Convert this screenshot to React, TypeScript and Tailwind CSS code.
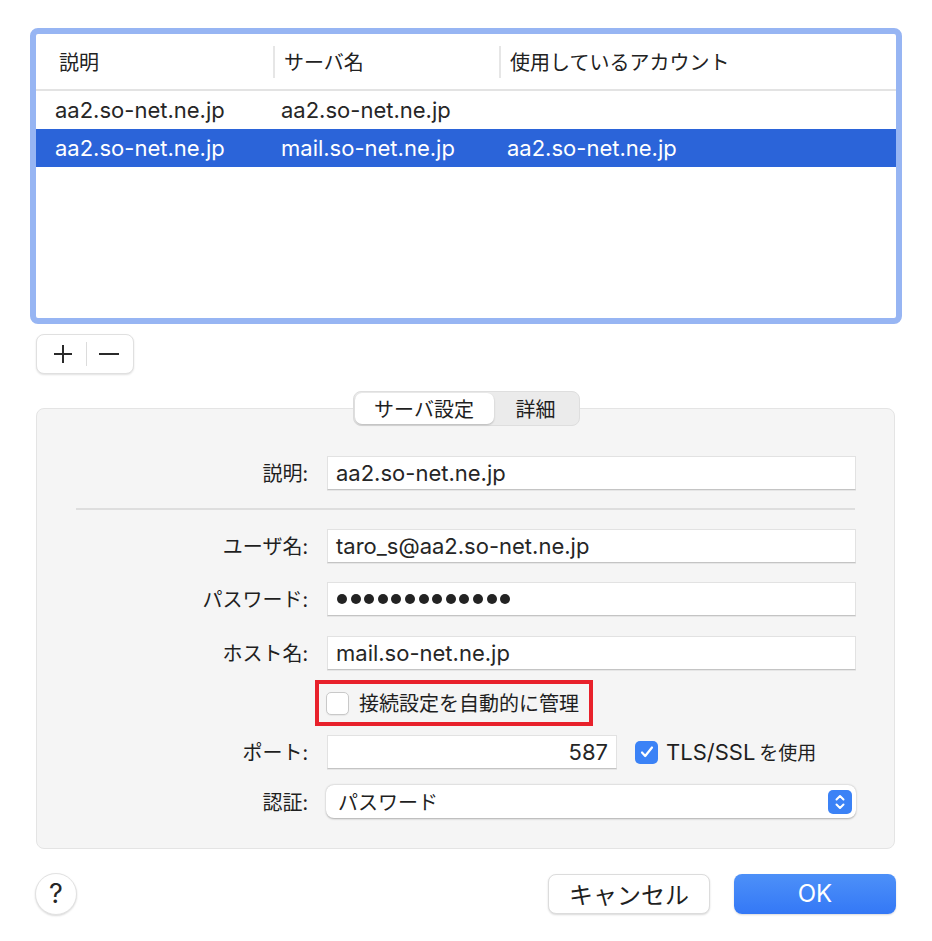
import React from "react";

const LAT = "[font-family:Inter,'Noto_Sans_CJK_JP',sans-serif]";
const JP = "[font-family:'Noto_Sans_CJK_JP',sans-serif]";

type Account = { desc: string; server: string; used: string; selected?: boolean };

const accounts: Account[] = [
  { desc: "aa2.so-net.ne.jp", server: "aa2.so-net.ne.jp", used: "" },
  { desc: "aa2.so-net.ne.jp", server: "mail.so-net.ne.jp", used: "aa2.so-net.ne.jp", selected: true },
];

function HeaderCell({ label, first }: { label: string; first?: boolean }) {
  return (
    <div className="flex items-center h-full">
      {!first && <span className="w-[2px] h-[32px] bg-[#e6e6e6] mr-[9px]" />}
      <span className={`${JP} text-[20px] leading-[28px] text-[#222] ${first ? "pl-[23px]" : ""}`}>{label}</span>
    </div>
  );
}

function Label({ children }: { children: React.ReactNode }) {
  return <div className={`${JP} w-[271px] text-right text-[20px] leading-[28px] text-[#1f1f1f]`}>{children}</div>;
}

function TextField({
  children,
  width = "w-[529px]",
  align = "justify-start",
}: {
  children: React.ReactNode;
  width?: string;
  align?: string;
}) {
  return (
    <div
      className={`${width} h-[34px] bg-white border border-[#e2e2e2] border-b-[#c4c4c4] shadow-[0_1px_0_rgba(0,0,0,0.06)] flex items-center ${align} px-[8px] ${LAT} text-[22px] leading-[28px] text-[#262626]`}
    >
      {children}
    </div>
  );
}

function FieldRow({ label, children, className = "" }: { label: string; children: React.ReactNode; className?: string }) {
  return (
    <div className={`flex items-center gap-[19px] ${className}`}>
      <Label>{label}</Label>
      {children}
    </div>
  );
}

function PasswordDots() {
  return (
    <div className="flex items-center gap-[3.6px] pl-[1px]">
      {Array.from({ length: 13 }).map((_, i) => (
        <span key={i} className="block w-[10px] h-[10px] rounded-full bg-[#232323]" />
      ))}
    </div>
  );
}

export default function App() {
  return (
    <div className="w-[932px] h-[941px] bg-white flex flex-col pt-[28px] px-[30px] text-[#262626]">
      {/* account list */}
      <div className="w-[872px] h-[296px] border-[6px] border-[#97b5f3] rounded-[8px] bg-white flex flex-col overflow-hidden">
        <div className="h-[57px] shrink-0 grid grid-cols-[237px_226px_1fr] border-b-2 border-[#e3e3e3]">
          <HeaderCell label="説明" first />
          <HeaderCell label="サーバ名" />
          <HeaderCell label="使用しているアカウント" />
        </div>
        {accounts.map((a, i) => (
          <div
            key={i}
            className={`h-[38px] shrink-0 grid grid-cols-[237px_226px_1fr] items-center ${LAT} text-[22px] leading-[28px] ${
              a.selected ? "bg-[#2b64d9] text-white" : "text-[#262626]"
            }`}
          >
            <span className="pl-[19px]">{a.desc}</span>
            <span className="pl-[8px]">{a.server}</span>
            <span className="pl-[8px]">{a.used}</span>
          </div>
        ))}
      </div>

      {/* add / remove */}
      <div className="mt-[10px] ml-[6px] w-[98px] h-[40px] rounded-[8px] bg-white border border-[#e0e0e0] shadow-[0_1px_2px_rgba(0,0,0,0.12)] flex items-center">
        <div className="w-[49px] flex justify-center pl-[2px]">
          <svg width="22" height="22" viewBox="0 0 22 22">
            <path d="M11 2v18M2 11h18" stroke="#2a2a2a" strokeWidth="2" />
          </svg>
        </div>
        <span className="w-[1px] h-[24px] bg-[#dcdcdc]" />
        <div className="flex-1 flex justify-center pr-[2px]">
          <svg width="22" height="22" viewBox="0 0 22 22">
            <path d="M1 11h20" stroke="#2a2a2a" strokeWidth="2" />
          </svg>
        </div>
      </div>

      {/* tabs */}
      <div className="mt-[17px] ml-[6px] w-[859px] flex justify-center relative z-10">
        <div className="ml-[1px] w-[227px] h-[35px] rounded-[8px] bg-[#ebebeb] border border-[#dedede] flex items-center p-[1px]">
          <div
            className={`${JP} w-[139px] h-[31px] rounded-[7px] bg-white shadow-[0_1px_2px_rgba(0,0,0,0.22)] flex items-center justify-center text-[20px] leading-[28px] text-[#1f1f1f]`}
          >
            サーバ設定
          </div>
          <div className={`${JP} flex-1 flex items-center justify-center text-[20px] leading-[28px] text-[#1f1f1f]`}>詳細</div>
        </div>
      </div>

      {/* settings group */}
      <div className="-mt-[18px] ml-[6px] w-[859px] h-[441px] bg-[#f5f5f5] border border-[#e4e4e4] rounded-[8px] pt-[47px] flex flex-col">
        <FieldRow label="説明:">
          <TextField>aa2.so-net.ne.jp</TextField>
        </FieldRow>

        <div className="mt-[18px] ml-[39px] w-[779px] h-[2px] bg-[#dedede]" />

        <FieldRow label="ユーザ名:" className="mt-[19px]">
          <TextField>taro_s@aa2.so-net.ne.jp</TextField>
        </FieldRow>

        <FieldRow label="パスワード:" className="mt-[19px]">
          <TextField>
            <PasswordDots />
          </TextField>
        </FieldRow>

        <FieldRow label="ホスト名:" className="mt-[20px]">
          <TextField>mail.so-net.ne.jp</TextField>
        </FieldRow>

        {/* auto-manage connection settings */}
        <div className="mt-[10px] ml-[278px] w-[278px] h-[46px] border-4 border-[#e8212b] flex items-center pl-[7px] gap-[10px]">
          <span className="w-[23px] h-[23px] shrink-0 rounded-[5px] bg-white border border-[#c9c9c9] shadow-[0_1px_1px_rgba(0,0,0,0.06)]" />
          <span className={`${JP} text-[20px] leading-[28px] text-[#1f1f1f] whitespace-nowrap`}>接続設定を自動的に管理</span>
        </div>

        <FieldRow label="ポート:" className="mt-[9px]">
          <TextField width="w-[290px]" align="justify-end">
            587
          </TextField>
          <div className="-ml-[1px] flex items-center gap-[8px]">
            <span className="w-[23px] h-[23px] rounded-[5px] bg-[#3b82f6] flex items-center justify-center">
              <svg width="16" height="16" viewBox="0 0 16 16">
                <path d="M3 8.5l3.2 3.5L13 3.5" fill="none" stroke="white" strokeWidth="2.2" strokeLinecap="round" strokeLinejoin="round" />
              </svg>
            </span>
            <span className="whitespace-nowrap text-[#1f1f1f]">
              <span className={`${LAT} text-[22px] leading-[28px]`}>TLS/SSL</span>
              <span className={`${JP} text-[19px] leading-[28px] ml-[4px]`}>を使用</span>
            </span>
          </div>
        </FieldRow>

        <FieldRow label="認証:" className="mt-[16px]">
          <div className="-ml-[1px] w-[530px] h-[33px] rounded-[8px] bg-white shadow-[0_0.5px_2px_rgba(0,0,0,0.3)] flex items-center pl-[12px] pr-[4px]">
            <span className={`${JP} flex-1 text-[20px] leading-[28px] text-[#1f1f1f]`}>パスワード</span>
            <span className="w-[24px] h-[24px] rounded-[5px] bg-[#3b82f6] flex items-center justify-center">
              <svg width="14" height="18" viewBox="0 0 14 18">
                <path
                  d="M3.5 6.5L7 3l3.5 3.5M3.5 11.5L7 15l3.5-3.5"
                  fill="none"
                  stroke="white"
                  strokeWidth="2"
                  strokeLinecap="round"
                  strokeLinejoin="round"
                />
              </svg>
            </span>
          </div>
        </FieldRow>
      </div>

      {/* dialog buttons */}
      <div className="mt-[24px] ml-[5px] mr-[6px] flex items-center">
        <div className="w-[42px] h-[42px] rounded-full bg-white border border-[#e2e2e2] shadow-[0_1px_2px_rgba(0,0,0,0.15)] flex items-center justify-center">
          <span className={`${LAT} text-[27px] leading-[28px] text-[#262626]`}>?</span>
        </div>
        <div className="flex-1" />
        <div
          className={`${JP} w-[162px] h-[40px] rounded-[8px] bg-white border border-[#dcdcdc] shadow-[0_1px_2px_rgba(0,0,0,0.15)] flex items-center justify-center text-[24px] leading-[28px] text-[#1f1f1f]`}
        >
          キャンセル
        </div>
        <div
          className={`${LAT} ml-[24px] w-[162px] h-[40px] rounded-[8px] bg-gradient-to-b from-[#4d90f8] to-[#3478f6] shadow-[0_1px_2px_rgba(0,0,0,0.15)] flex items-center justify-center text-[24px] leading-[28px] text-white`}
        >
          OK
        </div>
      </div>
    </div>
  );
}
